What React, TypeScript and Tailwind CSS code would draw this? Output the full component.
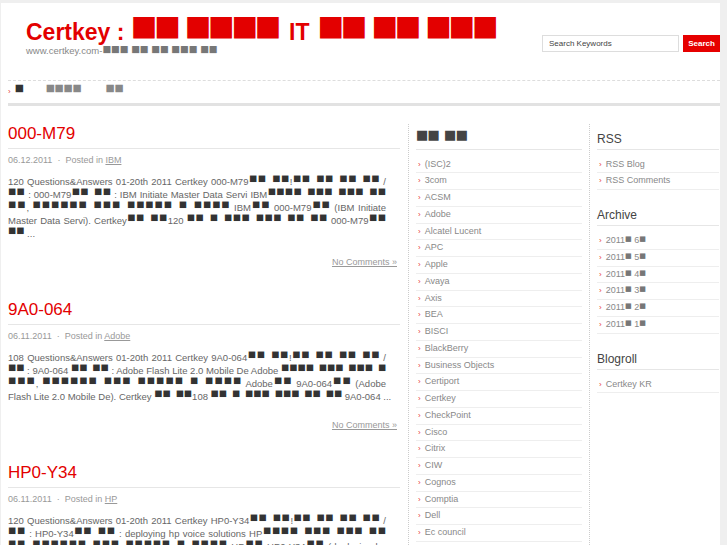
import React from "react";

const sans = "font-['Liberation_Sans',Arial,sans-serif]";

// boxes stand for glyphs the original page could not render
const box = {
  title: "font-['DejaVu_Sans'] text-[28.1px] tracking-[-3.2px] [word-spacing:0.6px] leading-[0] align-[5.3px]",
  sub: "font-['DejaVu_Sans'] text-[9.25px] tracking-[-0.1px] leading-[0] align-[2px] text-[#777]",
  nav: "font-['DejaVu_Sans'] text-[9.75px] tracking-[-0.26px] leading-[0] align-[3.7px]",
  body: "font-['DejaVu_Sans'] text-[8.5px] tracking-[0.2px] [word-spacing:2px] leading-[0] align-[4px] text-[#333]",
  head: "font-['DejaVu_Sans'] text-[13.1px] tracking-[-0.75px] [word-spacing:1.4px] leading-[0] align-[4.5px] text-[#444]",
  arch: "font-['DejaVu_Sans'] text-[7.1px] leading-[0] align-[2.2px] text-[#777]",
};

function T({ s, k }: { s: string; k: string }) {
  const parts = s.split(/(■+(?: +■+)*)/);
  return (
    <>
      {parts.map((p, i) =>
        p.startsWith("■") ? (
          <span key={i} className={k}>
            {p}
          </span>
        ) : (
          p
        )
      )}
    </>
  );
}

const posts = [
  {
    title: "000-M79",
    date: "06.12.2011",
    cat: "IBM",
    lines: [
      "120 Questions&Answers 01-20th 2011 Certkey 000-M79■■ ■■!■■ ■■ ■■ ■■ /",
      "■■ : 000-M79■■ ■■ : IBM Initiate Master Data Servi IBM■■■■ ■■■ ■■■ ■■",
      "■■, ■■■■■■ ■■■ ■■■■■ ■ ■■■■ IBM■■ 000-M79■■ (IBM Initiate",
      "Master Data Servi). Certkey■■ ■■120 ■■ ■ ■■■ ■■■ ■■ ■■ 000-M79■■",
      "■■ ...",
    ],
  },
  {
    title: "9A0-064",
    date: "06.11.2011",
    cat: "Adobe",
    lines: [
      "108 Questions&Answers 01-20th 2011 Certkey 9A0-064■■ ■■!■■ ■■ ■■ ■■ /",
      "■■ : 9A0-064 ■■ ■■ : Adobe Flash Lite 2.0 Mobile De Adobe ■■■■ ■■■ ■■■ ■",
      "■■■, ■■■■■■ ■■■ ■■■■■ ■ ■■■■ Adobe■■ 9A0-064■■ (Adobe",
      "Flash Lite 2.0 Mobile De). Certkey ■■ ■■108 ■■ ■ ■■■ ■■■ ■■ ■■ 9A0-064 ...",
    ],
  },
  {
    title: "HP0-Y34",
    date: "06.11.2011",
    cat: "HP",
    lines: [
      "120 Questions&Answers 01-20th 2011 Certkey HP0-Y34■■ ■■!■■ ■■ ■■ ■■ /",
      "■■ : HP0-Y34■■ ■■ : deploying hp voice solutions HP■■■■ ■■■ ■■■ ■■",
      "■■, ■■■■■■ ■■■ ■■■■■ ■ ■■■■ HP■■ HP0-Y34■■ (deploying hp",
      "voice solutions). Certkey■■ ■■120 ■■ ■ ■■■ ■■■ ■■ ■■ HP0-Y34■■",
      "■■ ...",
    ],
  },
];

const categories = [
  "(ISC)2", "3com", "ACSM", "Adobe", "Alcatel Lucent", "APC", "Apple", "Avaya", "Axis", "BEA",
  "BISCI", "BlackBerry", "Business Objects", "Certiport", "Certkey", "CheckPoint", "Cisco", "Citrix",
  "CIW", "Cognos", "Comptia", "Dell", "Ec council", "EC-Council",
];

const archive = ["6", "5", "4", "3", "2", "1"];

function Item({ children }: { children: React.ReactNode }) {
  return (
    <li className="flex items-center border-b border-[#eeeeee] pl-[2px] text-[9px] leading-[15.75px] text-[#888]">
      <span className="mr-[4px] text-[8px] text-[#e84040]">›</span>
      <span>{children}</span>
    </li>
  );
}

function Heading({ children }: { children: React.ReactNode }) {
  return (
    <h3 className="border-b border-[#e6e6e6] pb-[2px] text-[12px] leading-[16px] text-[#444]">{children}</h3>
  );
}

export default function App() {
  return (
    <div className={`min-h-screen bg-[#efefef] pt-[3px] ${sans}`}>
      <div className="ml-[1px] min-h-[542px] w-[719px] bg-white pl-[7px]">
        <header className="flex h-[77px] items-start justify-between">
          <div className="pl-[18px] pt-[15.6px]">
            <h1 className="whitespace-nowrap text-[23px] font-bold leading-[26px] text-[#e30000]">
              Certkey : <T s="■■ ■■■■" k={box.title} />
              <span className="ml-[11px] mr-[8px]">IT</span>
              <T s="■■ ■■ ■■■" k={box.title} />
            </h1>
            <p className="whitespace-nowrap text-[9.5px] leading-[12px] text-[#888]">
              www.certkey.com-<T s="■■■ ■■ ■■ ■■■ ■■" k={box.sub} />
            </p>
          </div>
          <form className="flex gap-[4px] pt-[32px]">
            <input
              readOnly
              value="Search Keywords"
              className="h-[17px] w-[137px] border border-[#dddddd] bg-white px-[6px] text-[8px] text-[#444] outline-none"
            />
            <button
              type="button"
              className="h-[17px] w-[37px] bg-[#e60000] text-[8px] font-bold text-white"
            >
              Search
            </button>
          </form>
        </header>

        <nav className="flex h-[23px] items-center border-t border-dashed border-[#dddddd] text-[9.5px]">
          <span className="text-[8px] text-[#e84040]">›</span>
          <span className="ml-[4px] text-[#333]">
            <T s="■" k={box.nav} />
          </span>
          <span className="ml-[22px] text-[#888]">
            <T s="■■■■" k={box.nav} />
          </span>
          <span className="ml-[24px] text-[#888]">
            <T s="■■" k={box.nav} />
          </span>
        </nav>
        <div className="h-[3px] bg-[#e2e2e2]" />

        <div className="flex pt-[18px]">
          <main className="w-[392px]">
            {posts.map((p) => (
              <article key={p.title} className="mb-[32px]">
                <h2 className="border-b border-[#e6e6e6] pb-[4px] text-[17px] leading-[20px] text-[#e30000]">
                  {p.title}
                </h2>
                <div className="mt-[5px] text-[9px] leading-[12px] text-[#999]">
                  {p.date}
                  <span className="mx-[5px]">·</span>
                  Posted in <a className="underline">{p.cat}</a>
                </div>
                <p className="mt-[9px] pr-[14px] text-[9.5px] leading-[13px] text-[#666]">
                  {p.lines.map((l, i) => (
                    <span
                      key={i}
                      className={
                        i < p.lines.length - 1
                          ? "block whitespace-nowrap text-justify [text-align-last:justify]"
                          : "block whitespace-nowrap"
                      }
                    >
                      <T s={l} k={box.body} />
                    </span>
                  ))}
                </p>
                <div className="mt-[16px] pr-[3px] text-right text-[9px] leading-[12px] text-[#999] underline">
                  No Comments »
                </div>
              </article>
            ))}
          </main>

          <aside className="ml-[8px] w-[174px] border-l border-dotted border-[#cccccc] pl-[7px] pt-[6.6px]">
            <Heading>
              <T s="■■ ■■" k={box.head} />
            </Heading>
            <ul className="pt-[7px]">
              {categories.map((c) => (
                <Item key={c}>{c}</Item>
              ))}
            </ul>
          </aside>

          <aside className="ml-[7px] w-[130px] border-l border-dotted border-[#cccccc] pl-[7px] pt-[6.6px]">
            <Heading>RSS</Heading>
            <ul className="pt-[7px]">
              <Item>RSS Blog</Item>
              <Item>RSS Comments</Item>
            </ul>
            <div className="mt-[17px]">
              <Heading>Archive</Heading>
              <ul className="pt-[7px]">
                {archive.map((m) => (
                  <Item key={m}>
                    2011<T s="■" k={box.arch} /> {m}
                    <T s="■" k={box.arch} />
                  </Item>
                ))}
              </ul>
            </div>
            <div className="mt-[17px]">
              <Heading>Blogroll</Heading>
              <ul className="pt-[7px]">
                <Item>Certkey KR</Item>
              </ul>
            </div>
          </aside>
        </div>
      </div>
    </div>
  );
}
